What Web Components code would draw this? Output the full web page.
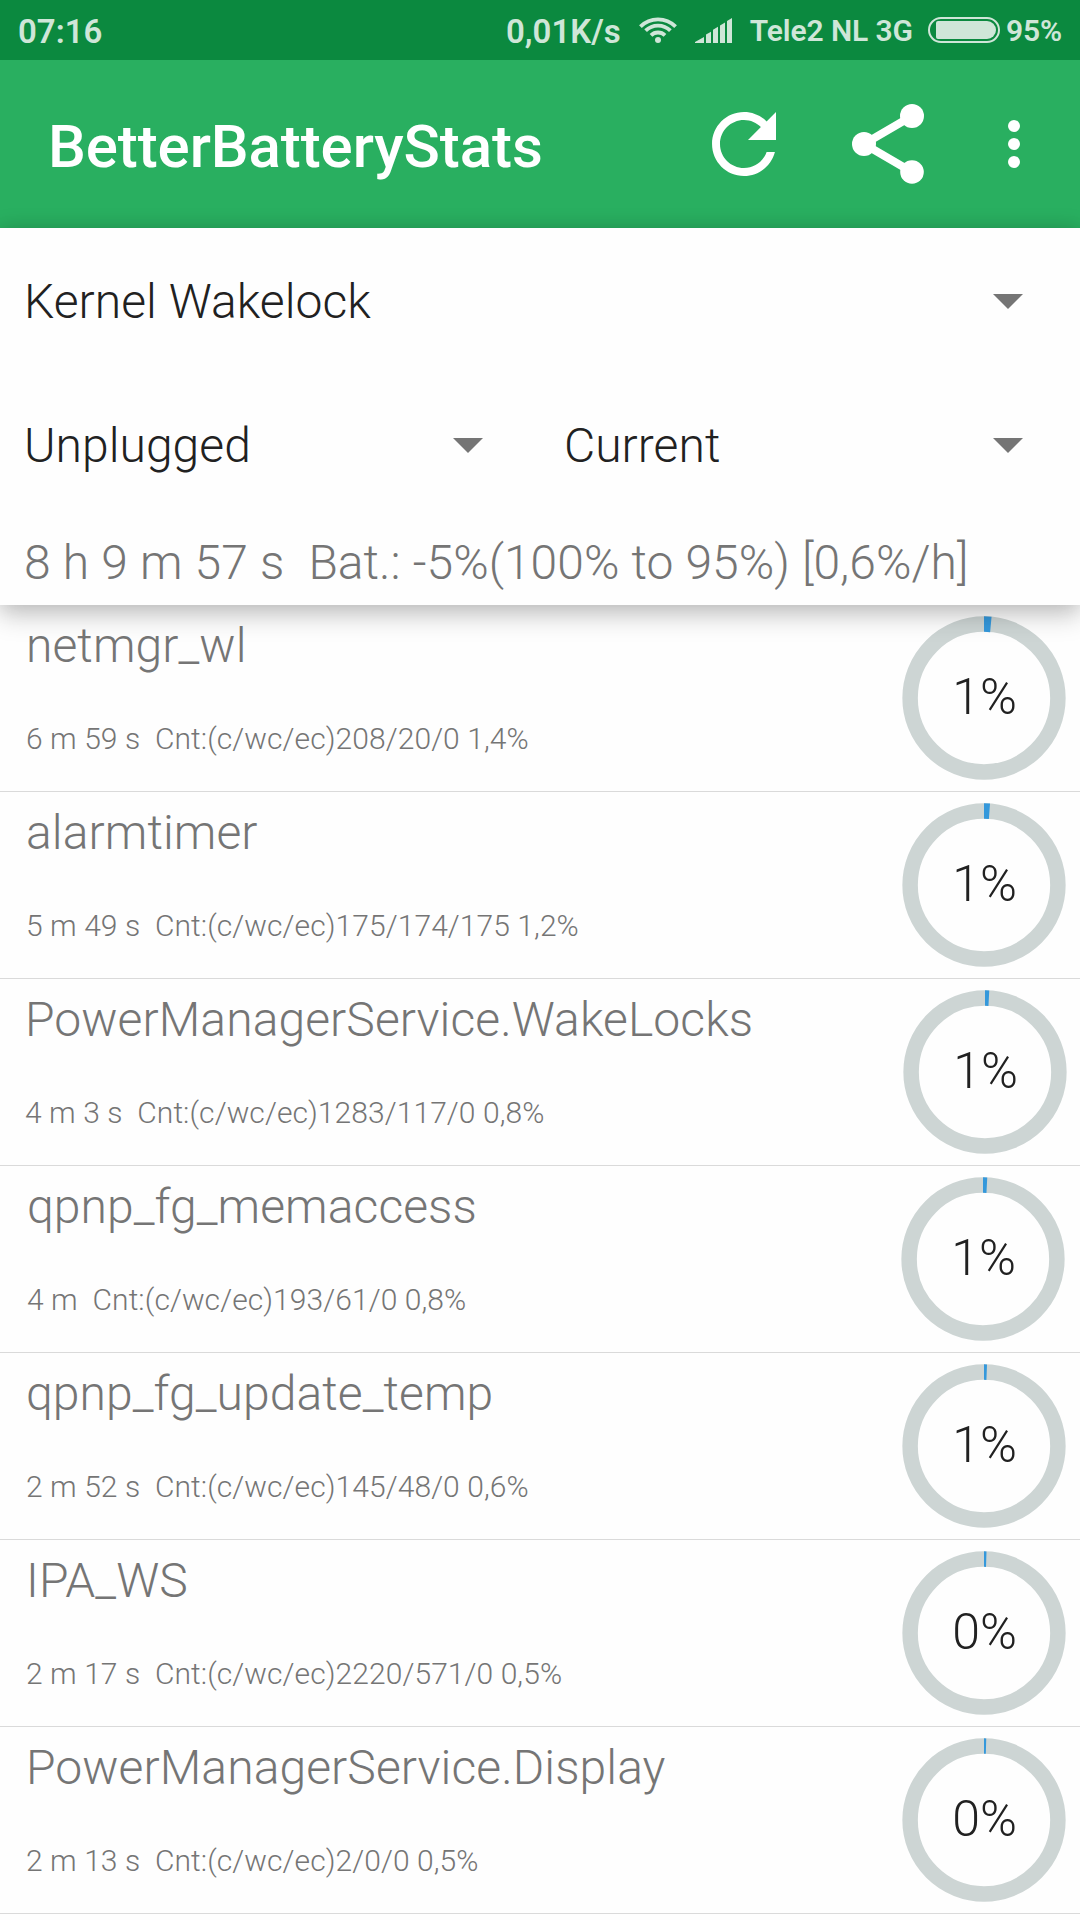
<!DOCTYPE html>
<html lang="en">
<head>
<meta charset="utf-8">
<title>BetterBatteryStats</title>
<style>
html,body{margin:0;background:#fefefe}
body{width:1080px;height:1920px;overflow:hidden;font-family:Roboto,"Noto Sans",sans-serif}
</style>
</head>
<body>
<battery-app></battery-app>
<script>
const define = (name, html) => customElements.define(name, class extends HTMLElement {
  connectedCallback() {
    if (this.shadowRoot) return;
    const t = document.createElement('template');
    t.innerHTML = typeof html === 'function' ? html(this) : html;
    this.attachShadow({mode: 'open'}).append(t.content.cloneNode(true));
  }
});

define('status-bar', `
<style>
:host{display:flex;height:60px;background:#0b893f;color:#cfe6d8;font-weight:650;box-sizing:border-box;padding:0 18px 0 18px;font-size:33px;line-height:64px;white-space:pre}
.grow{flex:1}
.small{font-size:30px;line-height:62px;letter-spacing:-.1px}
svg{display:block;fill:currentColor}
.wifi{margin:16px 0 0 18px}.sig{margin:18px 0 0 18px}.bat{margin:17px 0 0 15px}
.car{margin-left:17px}.pct{margin-left:6px}
</style>
<span>07:16</span><span class="grow"></span><span>0,01K/s</span>
<svg class="wifi" width="38" height="27" viewBox="0 0 38 27"><g fill="none" stroke="currentColor" stroke-width="3.8"><path d="M1.4 10.6a24.9 24.9 0 0 1 35.2 0"/><path d="M6.6 14.7a17.5 17.5 0 0 1 24.8 0"/><path d="M12 19.4a9.9 9.9 0 0 1 14 0"/></g><circle cx="19" cy="24" r="3"/></svg>
<svg class="sig" width="38" height="25" viewBox="0 0 38 25"><path d="M0 25v-1L9 19v6zM11 25V16.500l5-2.800V25zM18 25V11.800l5-3V25zM25 25V7.600l5-3V25zM32 25V3L37 0V25z"/></svg>
<span class="small car">Tele2 NL 3G</span>
<svg class="bat" width="72" height="26" viewBox="0 0 72 26"><rect x="1" y="1" width="70" height="24" rx="12" fill="none" stroke="currentColor" stroke-width="2"/><path d="M10 4H59a9 9 0 0 1 0 18H10Q8 22 8 20V6Q8 4 10 4z"/></svg>
<span class="small pct">95%</span>`);

define('app-bar', `
<style>
:host{display:flex;height:168px;background:#29af60;color:#fff}
h1{margin:0 auto 0 48px;font-size:60px;font-weight:500;line-height:174px;letter-spacing:-.09px}
svg{display:block;fill:#fff}
.r,.s{width:96px;height:96px;margin-top:36px}
.s{margin-left:48px}.m{width:72px;height:72px;margin:48px 30px 0 42px}
</style>
<h1><slot></slot></h1>
<svg class="r" viewBox="0 0 24 24"><path d="M17.65 6.35C16.2 4.9 14.21 4 12 4c-4.42 0-7.99 3.58-7.99 8s3.57 8 7.99 8c3.730 0 6.840-2.550 7.730-6h-2.080c-.82 2.330-3.040 4-5.650 4-3.310 0-6-2.690-6-6s2.690-6 6-6c1.660 0 3.140.690 4.220 1.780L13 11h7V4z"/></svg>
<svg class="s" viewBox="0 0 24 24"><path fill="none" stroke="#fff" stroke-width="2" d="M18 5L6 12l12 7"/><circle cx="18" cy="5" r="3"/><circle cx="6" cy="12" r="3"/><circle cx="18" cy="19" r="2.950"/></svg>
<svg class="m" viewBox="0 0 24 24"><circle cx="12" cy="6" r="2"/><circle cx="12" cy="12" r="2"/><circle cx="12" cy="18" r="2"/></svg>`);

define('drop-down', `
<style>
:host{display:flex;flex:1;height:144px;color:#212121;font-size:48px;font-weight:300;line-height:148px;letter-spacing:.04px}
span{margin-left:24px;flex:1}
svg{display:block;width:30px;height:15px;margin:66px 57px 0 0;fill:#757575}
</style>
<span><slot></slot></span><svg viewBox="0 0 30 15"><path d="M0 0h30L15 15z"/></svg>`);

define('filter-panel', `
<style>
:host{display:block;height:377px;background:#fefefe;position:relative;z-index:1;box-shadow:0 12px 24px rgba(0,0,0,.18),0 0 20px rgba(0,0,0,.15)}
.row{display:flex}
p{margin:0 0 0 24px;font-size:48px;font-weight:300;line-height:94px;letter-spacing:.01px;word-spacing:.38px;color:#757575;white-space:pre}
</style>
<div class="row"><drop-down>Kernel Wakelock</drop-down></div>
<div class="row"><drop-down>Unplugged</drop-down><drop-down>Current</drop-down></div>
<p><slot></slot></p>`);

define('percent-ring', el => `
<style>
:host{display:grid;width:164px;height:164px;place-items:center;font-size:50px;font-weight:300;color:#212121}
svg,span{grid-area:1/1}
svg{display:block}
span{line-height:60px;padding:0 0 2px 1px}
circle{fill:none;stroke-width:15.5}
</style>
<svg width="164" height="164" viewBox="0 0 164 164"><circle cx="82" cy="82" r="73.900" stroke="#cdd5d4"/><circle cx="82" cy="82" r="73.900" stroke="#3498db" pathLength="100" stroke-dasharray="${el.getAttribute('value')} 100" transform="rotate(-90 82 82)"/></svg>
<span><slot></slot></span>`);

define('stat-row', el => `
<style>
:host{display:flex;height:187px;box-sizing:border-box;border-bottom:1px solid #dadada;color:#757575;font-weight:300;white-space:pre;
 padding:0 ${14 - (+el.getAttribute('shift') || 0)}px 0 ${26 - (+el.getAttribute('shift') || 0)}px}
.t{flex:1;display:flex;flex-direction:column}
.n{font-size:48px;line-height:56px;margin-top:13px;letter-spacing:.08px}
.d{font-size:30px;line-height:36px;margin-top:47px;letter-spacing:.07px}
percent-ring{margin-top:11px}
</style>
<div class="t"><div class="n"><slot name="name"></slot></div><div class="d"><slot name="detail"></slot></div></div>
<percent-ring value="${el.getAttribute('share')}">${el.getAttribute('label')}</percent-ring>`);

const rows = [
  ['netmgr_wl', '6 m 59 s  Cnt:(c/wc/ec)208/20/0 1,4%', 1.5, '1%', 0],
  ['alarmtimer', '5 m 49 s  Cnt:(c/wc/ec)175/174/175 1,2%', 1.2, '1%', 0],
  ['PowerManagerService.WakeLocks', '4 m 3 s  Cnt:(c/wc/ec)1283/117/0 0,8%', .85, '1%', 1],
  ['qpnp_fg_memaccess', '4 m  Cnt:(c/wc/ec)193/61/0 0,8%', .85, '1%', -1],
  ['qpnp_fg_update_temp', '2 m 52 s  Cnt:(c/wc/ec)145/48/0 0,6%', .6, '1%', 0],
  ['IPA_WS', '2 m 17 s  Cnt:(c/wc/ec)2220/571/0 0,5%', .5, '0%', 0],
  ['PowerManagerService.Display', '2 m 13 s  Cnt:(c/wc/ec)2/0/0 0,5%', .45, '0%', 0]
];
define('battery-app', () => `
<style>:host{display:flex;flex-direction:column;width:1080px;height:1920px;overflow:hidden;background:#fefefe}</style>
<status-bar></status-bar>
<app-bar>BetterBatteryStats</app-bar>
<filter-panel>8 h 9 m 57 s  Bat.: -5%(100% to 95%) [0,6%/h]</filter-panel>
${rows.map(r => `<stat-row share="${r[2]}" label="${r[3]}" shift="${r[4]}"><span slot="name">${r[0]}</span><span slot="detail">${r[1]}</span></stat-row>`).join('')}`);
</script>
</body>
</html>
